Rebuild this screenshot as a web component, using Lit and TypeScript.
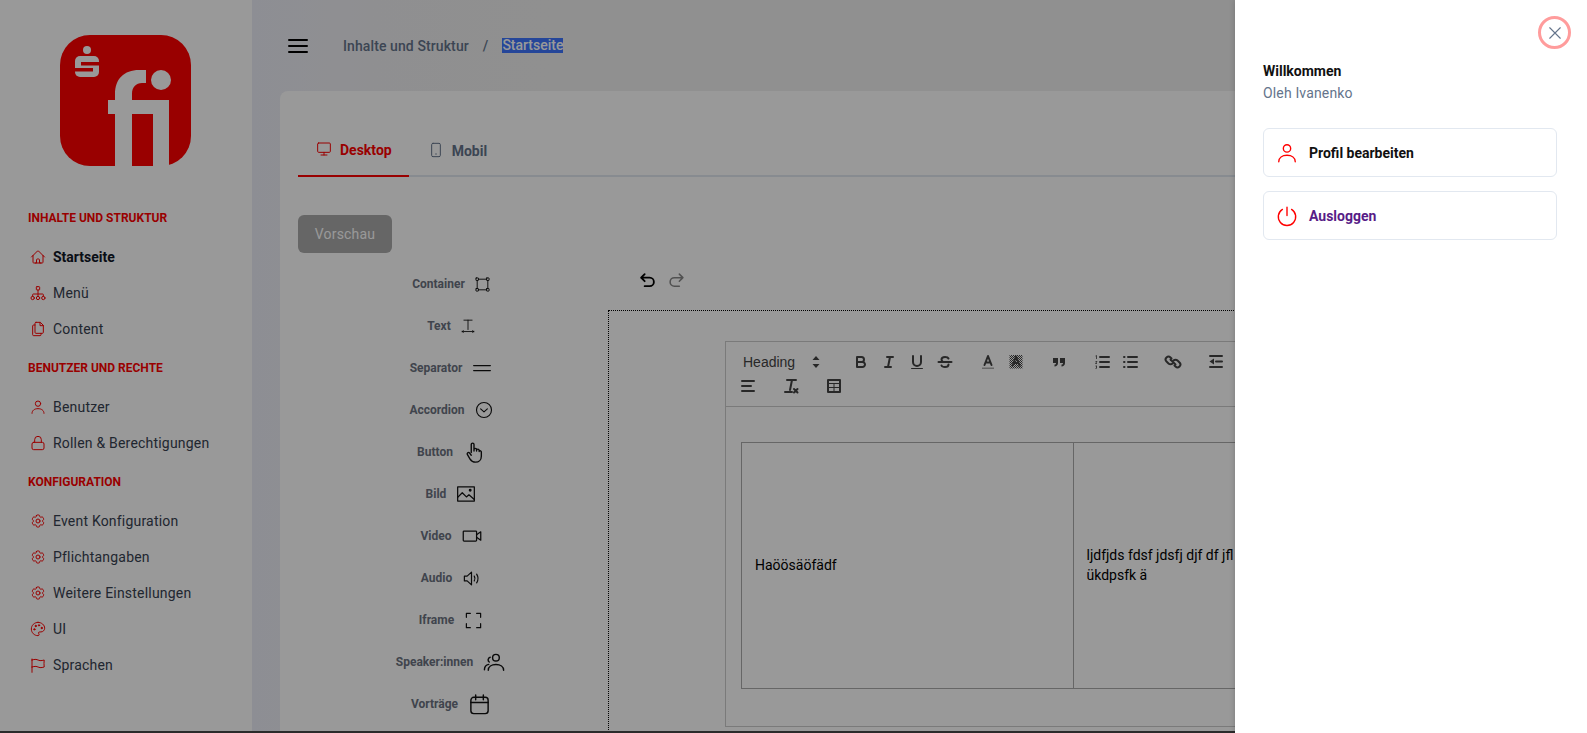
import { LitElement, html, css, svg } from "lit";
import { customElement } from "lit/decorators.js";

const cog = svg`<path d="M9.594 3.94c.09-.542.56-.94 1.11-.94h2.593c.55 0 1.02.398 1.11.94l.213 1.281c.063.374.313.686.645.87.074.04.147.083.22.127.324.196.72.257 1.075.124l1.217-.456a1.125 1.125 0 011.37.49l1.296 2.247a1.125 1.125 0 01-.26 1.431l-1.003.827c-.293.24-.438.613-.431.992a6.759 6.759 0 010 .255c-.007.378.138.75.43.99l1.005.828c.424.35.534.954.26 1.43l-1.298 2.247a1.125 1.125 0 01-1.369.491l-1.217-.456c-.355-.133-.75-.072-1.076.124a6.57 6.57 0 01-.22.128c-.331.183-.581.495-.644.869l-.213 1.28c-.09.543-.56.941-1.11.941h-2.594c-.55 0-1.02-.398-1.11-.94l-.213-1.281c-.062-.374-.312-.686-.644-.87a6.52 6.52 0 01-.22-.127c-.325-.196-.72-.257-1.076-.124l-1.217.456a1.125 1.125 0 01-1.369-.49l-1.297-2.247a1.125 1.125 0 01.26-1.431l1.004-.827c.292-.24.437-.613.43-.992a6.932 6.932 0 010-.255c.007-.378-.138-.75-.43-.99l-1.004-.828a1.125 1.125 0 01-.26-1.43l1.297-2.247a1.125 1.125 0 011.37-.491l1.216.456c.356.133.751.072 1.076-.124.072-.044.146-.087.22-.128.332-.183.582-.495.644-.869l.214-1.281z"/><path d="M15 12a3 3 0 11-6 0 3 3 0 016 0z"/>`;
const user = svg`<circle cx="12" cy="7" r="4"/><path d="M3 21.5c0-4.500 3.800-7 9-7s9 2.500 9 7"/>`;

const I: Record<string, any> = {
  home: svg`<path d="M2.250 12l8.954-8.955c.44-.439 1.152-.439 1.591 0L21.750 12M4.500 9.750v10.125c0 .621.504 1.125 1.125 1.125H9.750v-4.875c0-.621.504-1.125 1.125-1.125h2.250c.621 0 1.125.504 1.125 1.125V21h4.125c.621 0 1.125-.504 1.125-1.125V9.750M8.250 21h8.250"/>`,
  tree: svg`<rect x="9.500" y="2.500" width="5" height="5" rx="1"/><circle cx="4" cy="19.500" r="2.500"/><circle cx="12" cy="19.500" r="2.500"/><circle cx="20" cy="19.500" r="2.500"/><path d="M12 7.500v9.500M4 17v-2.500a1 1 0 011-1h14a1 1 0 011 1V17"/>`,
  copy: svg`<path d="M9 2h6.500L20 6.500V17a1.500 1.500 0 01-1.500 1.500H9A1.500 1.500 0 017.500 17V3.500A1.500 1.500 0 019 2z"/><path d="M15 2v5h5"/><path d="M7.500 6H5.500A1.500 1.500 0 004 7.500v13A1.500 1.500 0 005.500 22H15a1.500 1.500 0 001.500-1.500v-2"/>`,
  user,
  lock: svg`<rect x="3" y="11" width="18" height="11" rx="2.500"/><path d="M7 11V7a5 5 0 0110 0v4"/>`,
  cog,
  palette: svg`<path d="M12 2C6.500 2 2 6.500 2 12s4.500 10 10 10c.926 0 1.648-.746 1.648-1.688 0-.437-.18-.835-.437-1.125-.29-.289-.438-.652-.438-1.125a1.640 1.640 0 011.668-1.668h1.996c3.051 0 5.555-2.503 5.555-5.554C21.965 6.012 17.461 2 12 2z"/><circle cx="13.500" cy="6.500" r="1" fill="currentColor"/><circle cx="17.500" cy="10.500" r="1" fill="currentColor"/><circle cx="8.500" cy="7.500" r="1" fill="currentColor"/><circle cx="6.500" cy="12.500" r="1" fill="currentColor"/>`,
  flag: svg`<path d="M3 3v1.500M3 23v-8m0 0l2.770-.693a9 9 0 016.208.682l.108.054a9 9 0 006.086.710l3.114-.732a48.524 48.524 0 01-.005-10.499l-3.110.732a9 9 0 01-6.085-.711l-.108-.054a9 9 0 00-6.208-.682L3 4.500M3 15V4.500"/>`,
  monitor: svg`<rect x="2.500" y="3" width="19" height="14" rx="1.500"/><path d="M12 17v4M7.500 21h9"/>`,
  phone: svg`<rect x="5.500" y="2" width="13" height="20" rx="2"/><path d="M11.500 18h1"/>`,
  box: svg`<rect x="1.500" y="1.500" width="4" height="4" rx=".5"/><rect x="18.500" y="1.500" width="4" height="4" rx=".5"/><rect x="1.500" y="18.500" width="4" height="4" rx=".5"/><rect x="18.500" y="18.500" width="4" height="4" rx=".5"/><path d="M5.500 3.500h13M5.500 20.500h13M3.500 5.500v13M20.500 5.500v13"/>`,
  text: svg`<path d="M5 2h14M12 2v16M2 21.500h20M2 21.500l2-1.500M2 21.500L4 23M22 21.500L20 20M22 21.500L20 23"/>`,
  sep: svg`<path d="M2 9h20M2 15h20"/>`,
  acc: svg`<circle cx="12" cy="12" r="10"/><path d="M7.500 10.500l4.500 4 4.500-4"/>`,
  hand: svg`<path d="M9 12.500V3.800a1.500 1.500 0 013 0V11m0-1.500a1.400 1.400 0 012.800 0V11m0-.8a1.400 1.400 0 012.800 0v1.300m0-.5a1.400 1.400 0 012.400 1v4.500c0 3.800-2.700 6.500-6.300 6.500-3 0-4.700-1.200-6-3.300l-3-5a1.500 1.500 0 012.300-1.800L9 15.500"/>`,
  image: svg`<rect x="2" y="3.500" width="20" height="17"/><path d="M2 16l5.500-5.500 5 5 3-2.500 6.500 5.500"/><circle cx="17" cy="7.500" r="1" fill="currentColor"/>`,
  video: svg`<rect x="1.500" y="6" width="16" height="12" rx="1"/><path d="M17.500 10.500l5-3.500v10l-5-3.500"/>`,
  audio: svg`<path d="M3 9v6h3.500l5.500 5V4L6.500 9H3z"/><path d="M15.500 9c1.200 2 1.200 4 0 6M18.500 6.500c2.200 3.500 2.200 7.500 0 11"/>`,
  frame: svg`<path d="M3 8V3h5M16 3h5v5M21 16v5h-5M8 21H3v-5"/>`,
  users: svg`<circle cx="13.500" cy="7" r="3.500"/><path d="M5.500 20c0-3.500 3.300-6 8-6s8 2.500 8 6"/><path d="M7.500 6.500a2.800 2.800 0 00-1 5M1.500 19.500c0-2.600 1.500-4.800 4.500-5.500"/>`,
  cal: svg`<rect x="3" y="4.500" width="18" height="17" rx="3"/><path d="M8 2v5M16 2v5M3 10h18"/>`,
};

const ic = (n: string, c = "") => html`<svg class="i ${c}" viewBox="0 0 24 24">${I[n]}</svg>`;

const NAV = [
  ["INHALTE UND STRUKTUR", [["home", "Startseite", 1], ["tree", "Menü"], ["copy", "Content"]]],
  ["BENUTZER UND RECHTE", [["user", "Benutzer"], ["lock", "Rollen & Berechtigungen"]]],
  ["KONFIGURATION", [["cog", "Event Konfiguration"], ["cog", "Pflichtangaben"], ["cog", "Weitere Einstellungen"], ["palette", "UI"], ["flag", "Sprachen"]]],
] as any[];

const PAL: [string, string, number][] = [
  ["Container", "box", 15], ["Text", "text", 14], ["Separator", "sep", 20], ["Accordion", "acc", 18],
  ["Button", "hand", 22], ["Bild", "image", 20], ["Video", "video", 20], ["Audio", "audio", 19],
  ["Iframe", "frame", 19], ["Speaker:innen", "users", 23], ["Vorträge", "cal", 23],
];

const q = (p: any) => html`<span class="qb"><svg viewBox="0 0 18 18">${p}</svg></span>`;
const QL = {
  bold: svg`<path class="s" d="M5 4h4.500A2.500 2.500 0 0112 6.500v0A2.500 2.500 0 019.500 9H5z"/><path class="s" d="M5 9h5.500A2.500 2.500 0 0113 11.500v0a2.500 2.500 0 01-2.500 2.500H5z"/>`,
  italic: svg`<path class="s" d="M7 4h6M5 14h6M8 14l2-10"/>`,
  under: svg`<path class="s" d="M5 3v6a4 4 0 008 0V3"/><rect class="f" x="3" y="15" width="12" height="1" rx=".5"/>`,
  strike: svg`<path class="s" d="M2.500 9h13"/><path class="s" d="M12.500 5.500C12 4.300 10.500 4 9 4 7 4 5.500 4.800 5.500 6.500c0 1 .6 1.800 1.500 2.500M5.500 12.500C6 13.800 7.500 14 9 14c2 0 3.500-.800 3.500-2.500"/>`,
  color: svg`<path class="s" d="M5.500 12L9 3l3.500 9M6.500 9.500h5"/><rect class="g" x="3" y="14.500" width="12" height="1.500"/>`,
  bg: svg`<defs><pattern id="hatch" width="2" height="2" patternUnits="userSpaceOnUse"><rect width="1" height="1" fill="#444"/><rect x="1" y="1" width="1" height="1" fill="#444"/></pattern></defs><rect fill="url(#hatch)" x="2.500" y="2" width="13" height="13.500"/><path class="s" d="M5.500 12.500L9 3.500l3.500 9M6.500 10h5"/>`,
  quote: svg`<path class="f" d="M3 5h5v5c0 2-1.500 3.500-3.500 3.500v-2C5.500 11.500 6 11 6 10H3zM10 5h5v5c0 2-1.500 3.500-3.500 3.500v-2c1 0 1.500-.500 1.500-1.500h-3z"/>`,
  ol: svg`<path class="s" d="M7 4h9M7 9h9M7 14h9"/><path class="t" d="M2.500 3l1-.500V6M2.500 8.500h1.500l-1.500 2h1.500M2.500 13h1.500l-1 1 1 1-1.500.500"/>`,
  ul: svg`<path class="s" d="M7 4h9M7 9h9M7 14h9M3 4h.5M3 9h.5M3 14h.5"/>`,
  link: svg`<path class="s" d="M7.500 5.500l-1-1a2.800 2.800 0 00-4 4l2 2a2.800 2.800 0 004 0"/><path class="s" d="M10.500 12.500l1 1a2.800 2.800 0 004-4l-2-2a2.800 2.800 0 00-4 0"/><path class="s" d="M6.500 6.500l5 5"/>`,
  indent: svg`<path class="s" d="M3 3h12M3 14h12M9 8.500h6"/><path class="f" d="M2.500 8.500l4.500-3v6z"/>`,
  left: svg`<path class="s" d="M3 4h12M3 9h9M3 14h12"/>`,
  clean: svg`<path class="s" d="M5 3h9M10 3L8 13M3 15h7"/><path class="s" d="M12 12l3.500 3.500M15.500 12L12 15.500"/>`,
  table: svg`<rect class="s" x="3" y="3" width="12" height="12"/><path class="s2" d="M9 6.500v8M3.500 6.500h11M3.500 10.500h11"/>`,
};

@customElement("app-root")
export class AppRoot extends LitElement {
  static styles = css`
    :host { display: block; position: relative; height: 733px; overflow: hidden; font-family: Roboto, "Noto Sans", sans-serif; font-size: 14px; background: #484848; }
    * { box-sizing: border-box; }
    .i { width: 16px; height: 16px; fill: none; stroke: currentColor; stroke-width: 1.5; stroke-linecap: round; stroke-linejoin: round; flex: none; display: block; }
    .page { display: flex; height: 731px; overflow: hidden; background: #f1f5f9; }
    .side { width: 252px; flex: none; background: #fff; padding: 35px 0 0 0; }
    .logo { display: block; width: 131px; height: 131px; margin: 0 0 43px 60px; }
    .sec { height: 18px; line-height: 18px; margin: 12px 0 12px 28px; font-size: 12px; font-weight: 700; color: #f00; white-space: nowrap; }
    .it { height: 36px; display: flex; align-items: center; padding-left: 30px; gap: 7px; color: #374151; white-space: nowrap; letter-spacing: .2px; }
    .it .i { color: #f00; }
    .it.on { color: #111827; font-weight: 700; letter-spacing: 0; }
    .main { flex: 1; min-width: 0; display: flex; flex-direction: column; background: linear-gradient(90deg, #ecedf7 0, #efeff2 120px, #f0f0f0 300px); }
    .hd { height: 91px; flex: none; display: flex; align-items: center; padding-left: 34px; color: #64748b; font-weight: 500; white-space: nowrap; letter-spacing: .1px; }
    .burger { width: 24px; height: 24px; stroke: #000; stroke-width: 2; margin-right: 33px; }
    .sl { margin: 0 14px; }
    .sel { background: #3e75ff; color: #fff; line-height: 15px; height: 15px; display: block; letter-spacing: 0; }
    .card { flex: 1; margin-left: 28px; background: #fff; border-radius: 8px 0 0 0; padding: 32px 0 0 18px; min-height: 0; overflow: hidden; }
    .tabs { display: flex; height: 54px; border-bottom: 2px solid #e2e8f0; color: #64748b; font-weight: 700; }
    .tab { display: flex; align-items: center; gap: 8px; padding: 0 17px 0 18px; height: 54px; }
    .tab span { padding-top: 2px; }
    .tab.on { color: #f00; border-bottom: 2px solid #f00; }
    .tab + .tab { padding-left: 19px; }
    .btn { margin-top: 38px; width: 94px; height: 38px; border-radius: 6px; background: #aaa; color: #fff; font-weight: 400; letter-spacing: .2px; display: flex; align-items: center; justify-content: center; }
    .work { display: flex; margin-top: 10px; }
    .pal { width: 306px; flex: none; }
    .pi { height: 42px; display: flex; align-items: center; justify-content: center; gap: 10px; color: #6b7280; font-size: 12px; font-weight: 700; white-space: nowrap; }
    .pi .wrap { color: #111; }
    .ed { flex: none; width: 1000px; padding-left: 4px; }
    .undo { height: 47px; padding-left: 31px; display: flex; gap: 12px; align-items: center; padding-bottom: 13px; }
    .undo .i { width: 17px; height: 17px; stroke-width: 2.600; color: #000; }
    .undo .i.off { color: #888; stroke-width: 2.200; }
    .drop { border: 1px dotted #000; border-right: 0; padding: 30px 0 0 116px; height: 440px; }
    .q { width: 860px; border: 1px solid #ccc; }
    .bar { border-bottom: 1px solid #ccc; padding: 8px 8px; }
    .rows { display: flex; flex-wrap: wrap; width: 570px; }
    .grp { display: flex; margin-right: 15px; }
    .pick { width: 98px; height: 24px; display: flex; align-items: center; justify-content: space-between; padding: 0 12px 0 9px; font-family: "Liberation Sans", sans-serif; color: #444; font-size: 14px; }
    .qb { width: 28px; height: 24px; padding: 3px 5px; display: block; }
    .qb svg { width: 18px; height: 18px; display: block; }
    .qb .s { fill: none; stroke: #444; stroke-width: 2; stroke-linecap: round; stroke-linejoin: round; }
    .qb .s2 { fill: none; stroke: #444; stroke-width: 1; }
    .qb .t { fill: none; stroke: #444; stroke-width: .8; }
    .qb .f { fill: #444; }
    .qb .g { fill: #aaa; }
    .body { padding: 35px 15px 37px; }
    table { border-collapse: collapse; width: 664px; height: 247px; table-layout: fixed; color: #000; line-height: 20px; }
    td { border: 1px solid #aaa; padding: 0 13px 2px; vertical-align: middle; }
    .ov { position: absolute; inset: 0; background: rgba(0, 0, 0, .4); }
    .dr { position: absolute; top: 0; right: 0; bottom: 0; width: 352px; background: #fff; box-shadow: 0 0 6px rgba(0, 0, 0, .2); padding: 16px 30px 0 28px; }
    .x { width: 33px; height: 33px; margin: 0 -14px 0 auto; border-radius: 50%; border: 3.500px solid #ff9c9c; display: flex; align-items: center; justify-content: center; color: #64748b; }
    .x .i { width: 18px; height: 18px; }
    .hi { margin-top: 11px; height: 22px; line-height: 22px; font-weight: 700; color: #111; }
    .nm { height: 22px; line-height: 22px; color: #64748b; letter-spacing: .15px; }
    .b { height: 49px; margin-top: 14px; border: 1px solid #e2e8f0; border-radius: 6px; display: flex; align-items: center; gap: 11px; padding-left: 12px; font-weight: 700; color: #111; }
    .b .i { width: 22px; height: 22px; color: #f00; }
    .b.pur { color: #581c87; }
    .nm + .b { margin-top: 24px; }
  `;

  render() {
    return html`
      <div class="page">
        <aside class="side">
          <svg class="logo" viewBox="60 35 131 131" role="img" aria-label="Logo">
            <rect x="60" y="35" width="131" height="131" rx="30" fill="#f00"/>
            <circle cx="87" cy="50" r="4" fill="#fff"/>
            <rect x="75" y="56" width="24" height="21" rx="5" fill="#fff"/>
            <path d="M81 62h18v3.500H81zM75 68h18v3.500H75z" fill="#f00"/>
            <path d="M115 166V94c0-15 9-24 24-24h7v13h-4c-6 0-10 4-10 11v6h37v66h-16v-52h-21v52zM108 100h8v14h-8z" fill="#fff"/>
            <circle cx="161" cy="80" r="10" fill="#fff"/>
          </svg>
          ${NAV.map(([t, items]) => html`<div class="sec">${t}</div>
            ${items.map((x: any) => html`<div class="it ${x[2] ? "on" : ""}">${ic(x[0])}<span>${x[1]}</span></div>`)}`)}
        </aside>
        <main class="main">
          <header class="hd">
            <svg class="i burger" viewBox="0 0 24 24"><path d="M3 6h18M3 12h18M3 18h18"/></svg>
            <span>Inhalte und Struktur</span><span class="sl">/</span><span class="sel">Startseite</span>
          </header>
          <section class="card">
            <div class="tabs">
              <div class="tab on">${ic("monitor")}<span>Desktop</span></div>
              <div class="tab">${ic("phone")}<span>Mobil</span></div>
            </div>
            <div class="btn">Vorschau</div>
            <div class="work">
              <div class="pal">
                ${PAL.map(([t, n, s]) => html`<div class="pi"><span>${t}</span><span class="wrap"><svg class="i" style="width:${s}px;height:${s}px" viewBox="0 0 24 24">${I[n]}</svg></span></div>`)}
              </div>
              <div class="ed">
                <div class="undo">
                  <svg class="i" viewBox="0 0 24 24"><path d="M8 3L3 8l5 5M3 8h12a6 6 0 010 12H8"/></svg>
                  <svg class="i off" viewBox="0 0 24 24"><path d="M16 3l5 5-5 5M21 8H9a6 6 0 000 12h7"/></svg>
                </div>
                <div class="drop">
                  <div class="q">
                    <div class="bar"><div class="rows">
                      <div class="grp"><div class="pick"><span>Heading</span><svg width="8" height="14" viewBox="0 0 8 14"><path d="M4 1l3.500 4h-7zM4 13L.5 9h7z" fill="#444"/></svg></div></div>
                      <div class="grp">${q(QL.bold)}${q(QL.italic)}${q(QL.under)}${q(QL.strike)}</div>
                      <div class="grp">${q(QL.color)}${q(QL.bg)}</div>
                      <div class="grp">${q(QL.quote)}</div>
                      <div class="grp">${q(QL.ol)}${q(QL.ul)}</div>
                      <div class="grp">${q(QL.link)}</div>
                      <div class="grp">${q(QL.indent)}${q(QL.indent)}</div>
                      <div class="grp">${q(QL.left)}</div>
                      <div class="grp">${q(QL.clean)}</div>
                      <div class="grp">${q(QL.table)}</div>
                    </div></div>
                    <div class="body">
                      <table><tr><td>Haöösäöfädf</td><td>ljdfjds fdsf jdsfj djf df jfl jf fdslf jsdlf sdkfj sdlf<br>ükdpsfk ä</td></tr></table>
                    </div>
                  </div>
                </div>
              </div>
            </div>
          </section>
        </main>
      </div>
      <div class="ov"></div>
      <aside class="dr">
        <div class="x"><svg class="i" viewBox="0 0 24 24"><path d="M5 5l14 14M19 5L5 19"/></svg></div>
        <div class="hi">Willkommen</div>
        <div class="nm">Oleh Ivanenko</div>
        <div class="b">${ic("user")}<span>Profil bearbeiten</span></div>
        <div class="b pur"><svg class="i" viewBox="0 0 24 24"><path d="M12 2.500v9M7 4.800a9.500 9.500 0 1010 0"/></svg><span>Ausloggen</span></div>
      </aside>
    `;
  }
}
